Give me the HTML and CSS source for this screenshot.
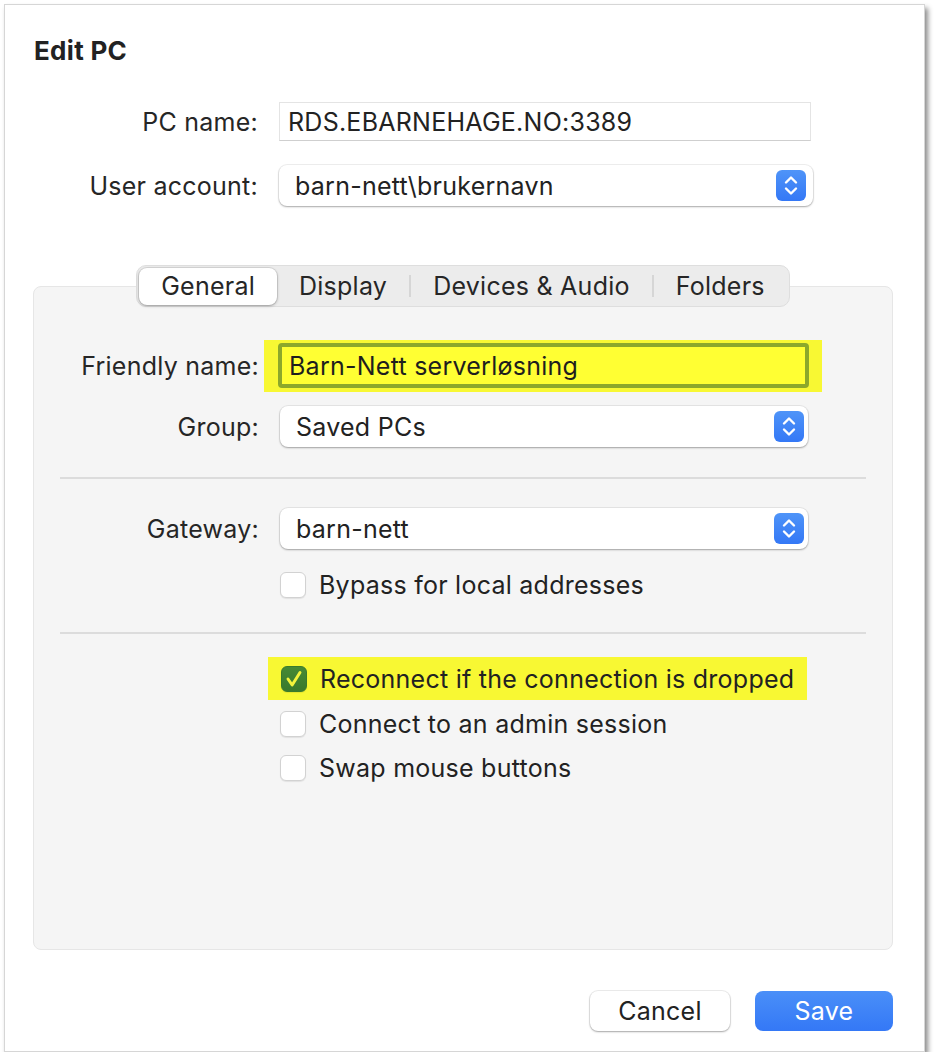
FILE: index.html
```html
<!DOCTYPE html>
<html lang="en">
<head>
    <meta charset="UTF-8">
    <meta name="viewport" content="width=device-width, initial-scale=1.0">
    <title>Edit PC</title>
    <link rel="stylesheet" href="styles.css">
</head>
<body>
    <div class="window">
        <h1 class="title">Edit PC</h1>

        <div class="form top-form">
            <div class="label">PC name:</div>
            <div class="text-field">RDS.EBARNEHAGE.NO:3389</div>

            <div class="label">User account:</div>
            <div class="popup account-popup">
                <span>barn-nett\brukernavn</span>
                <span class="stepper">
                    <svg viewBox="0 0 30 31"><path d="M10 12.5 L15 7.5 L20 12.5 M10 18.5 L15 23.5 L20 18.5"/></svg>
                </span>
            </div>
        </div>

        <div class="tab-view">
            <div class="tabs">
                <div class="segmented">
                    <div class="segment selected">General</div>
                    <div class="segment">Display</div>
                    <div class="divider"></div>
                    <div class="segment">Devices &amp; Audio</div>
                    <div class="divider"></div>
                    <div class="segment">Folders</div>
                </div>
            </div>

            <div class="panel">
                <div class="form panel-form">
                    <div class="label">Friendly name:</div>
                    <div class="highlight field-highlight">
                        <div class="text-field focused">Barn-Nett serverløsning</div>
                    </div>

                    <div class="label">Group:</div>
                    <div class="popup">
                        <span>Saved PCs</span>
                        <span class="stepper">
                            <svg viewBox="0 0 30 31"><path d="M10 12.5 L15 7.5 L20 12.5 M10 18.5 L15 23.5 L20 18.5"/></svg>
                        </span>
                    </div>
                </div>

                <div class="separator"></div>

                <div class="form gateway-form">
                    <div class="label">Gateway:</div>
                    <div class="popup">
                        <span>barn-nett</span>
                        <span class="stepper">
                            <svg viewBox="0 0 30 31"><path d="M10 12.5 L15 7.5 L20 12.5 M10 18.5 L15 23.5 L20 18.5"/></svg>
                        </span>
                    </div>

                    <div></div>
                    <div class="check-row bypass-row">
                        <span class="checkbox"></span>
                        <span>Bypass for local addresses</span>
                    </div>
                </div>

                <div class="separator"></div>

                <div class="options">
                    <div class="highlight check-highlight">
                        <div class="check-row">
                            <span class="checkbox checked">
                                <svg viewBox="0 0 26 26"><path d="M6.5 13 L11 19.5 L19.5 6"/></svg>
                            </span>
                            <span>Reconnect if the connection is dropped</span>
                        </div>
                    </div>
                    <div class="check-row option-row first-plain">
                        <span class="checkbox"></span>
                        <span>Connect to an admin session</span>
                    </div>
                    <div class="check-row option-row">
                        <span class="checkbox"></span>
                        <span>Swap mouse buttons</span>
                    </div>
                </div>
            </div>
        </div>

        <div class="buttons">
            <div class="button cancel">Cancel</div>
            <div class="button save">Save</div>
        </div>
    </div>
</body>
</html>
```

FILE: styles.css
```css
body {
    margin: 0;
    background-color: #ffffff;
    font-family: Inter, "Noto Sans", sans-serif;
    font-size: 25px;
    letter-spacing: 0.25px;
    color: #262626;
}
.window {
    margin: 4px 0 0 4px;
    width: 921px;
    height: 1048px;
    background-color: #ffffff;
    border: 1px solid #d6d6d6;
    box-sizing: border-box;
    box-shadow: 3px 4px 5px rgba(0, 0, 0, 0.45);
}
.title {
    margin: 31px 0 0 29px;
    font-size: 26px;
    line-height: 30px;
    font-weight: 700;
    letter-spacing: 0.3px;
    color: #222;
}

/* label + control grids */
.form {
    display: grid;
    grid-template-columns: 253px 540px;
    column-gap: 21px;
    align-items: center;
}
.label {
    text-align: right;
    white-space: nowrap;
}
.top-form {
    margin-top: 36px;
    grid-template-rows: 39px 41px;
    row-gap: 24px;
}
.text-field {
    width: 532px;
    height: 39px;
    box-sizing: border-box;
    padding-left: 8px;
    display: flex;
    align-items: center;
    background-color: #fff;
    border: 1px solid #e4e4e4;
    border-bottom-color: #cfcfcf;
    color: #222;
}
.popup {
    width: 528px;
    height: 41px;
    box-sizing: border-box;
    padding: 0 4px 0 16px;
    display: flex;
    align-items: center;
    justify-content: space-between;
    background-color: #fff;
    border-radius: 8px;
    box-shadow: 0 0 0 1px rgba(0, 0, 0, 0.06), 0 1px 2px rgba(0, 0, 0, 0.3);
    color: #222;
}
.account-popup {
    width: 534px;
    padding-right: 7px;
}
.stepper {
    width: 30px;
    height: 31px;
    border-radius: 6px;
    background: linear-gradient(#4f94f8, #3478f6);
    display: flex;
}
.stepper svg {
    width: 30px;
    height: 31px;
    fill: none;
    stroke: #fff;
    stroke-width: 2.4;
    stroke-linecap: round;
    stroke-linejoin: round;
}

/* tabs */
.tab-view {
    margin: 59px 31px 0 28px;
}
.tabs {
    display: flex;
    justify-content: center;
    margin-bottom: -21px;
    position: relative;
    z-index: 1;
}
.segmented {
    display: flex;
    align-items: center;
    height: 42px;
    box-sizing: border-box;
    padding: 2px;
    background-color: #ececec;
    border: 1px solid #dedede;
    border-radius: 10px;
}
.segment {
    height: 37px;
    padding: 0 22px;
    display: flex;
    align-items: center;
    border-radius: 8px;
    color: #262626;
}
.segment.selected {
    background-color: #fff;
    box-shadow: 0 0 0 1px rgba(0, 0, 0, 0.08), 0 1px 3px rgba(0, 0, 0, 0.3);
}
.divider {
    width: 2px;
    height: 22px;
    background-color: #d6d6d6;
}
.panel {
    height: 664px;
    box-sizing: border-box;
    padding-top: 53px;
    background-color: #f5f5f5;
    border: 1px solid #e6e6e6;
    border-radius: 8px;
}
.panel-form {
    grid-template-columns: 225px 560px;
    grid-template-rows: 52px 41px;
    row-gap: 14px;
}
.highlight {
    background-color: #f8f833;
}
.field-highlight {
    margin-left: -16px;
    width: 558px;
    height: 52px;
    box-sizing: border-box;
    padding: 3px 0 0 14px;
}
.text-field.focused {
    width: 531px;
    height: 45px;
    padding-left: 7px;
    background-color: #ffff33;
    border: 4px solid #8ca82b;
    border-radius: 4px;
    color: #1e1e1e;
}
.separator {
    height: 2px;
    margin: 30px 26px 0 26px;
    background-color: #dcdcdc;
}
.gateway-form {
    margin-top: 29px;
    grid-template-columns: 225px 560px;
    grid-template-rows: 41px 27px;
    row-gap: 22px;
}
.gateway-form + .separator {
    margin-top: 34px;
}

/* checkboxes */
.check-row {
    display: flex;
    align-items: center;
    gap: 13px;
    white-space: nowrap;
    color: #222;
}
.checkbox {
    width: 26px;
    height: 26px;
    box-sizing: border-box;
    border-radius: 6px;
    background-color: #fff;
    border: 1px solid #d2d2d2;
    box-shadow: 0 1px 1px rgba(0, 0, 0, 0.08);
    display: flex;
}
.checkbox.checked {
    background: linear-gradient(#478a35, #3a7a2c);
    border-color: #3a7a2c;
}
.checkbox svg {
    width: 24px;
    height: 24px;
    fill: none;
    stroke: #f4f43c;
    stroke-width: 3.2;
    stroke-linecap: round;
    stroke-linejoin: round;
}
.options {
    margin: 23px 0 0 246px;
}
.check-highlight {
    display: inline-flex;
    align-items: center;
    height: 43px;
    margin-left: -12px;
    padding: 0 13px 0 13px;
}
.option-row {
    height: 44px;
}
.option-row.first-plain {
    margin-top: 2px;
}

/* buttons */
.buttons {
    display: flex;
    justify-content: flex-end;
    gap: 25px;
    margin: 41px 31px 0 0;
}
.button {
    height: 40px;
    display: flex;
    align-items: center;
    justify-content: center;
    border-radius: 8px;
}
.cancel {
    width: 140px;
    background-color: #fff;
    box-shadow: 0 0 0 1px rgba(0, 0, 0, 0.07), 0 1px 2px rgba(0, 0, 0, 0.3);
    color: #222;
}
.save {
    width: 138px;
    background: linear-gradient(#4a8ff8, #3478f6);
    color: #fff;
}
```
